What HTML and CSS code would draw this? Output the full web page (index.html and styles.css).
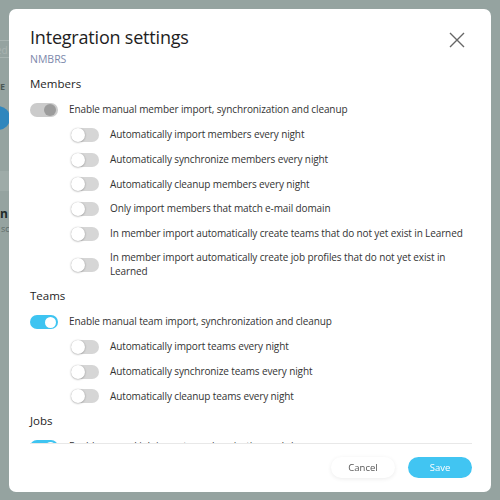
FILE: index.html
```html
<!DOCTYPE html>
<html lang="en">
<head>
<meta charset="utf-8">
<title>Integration settings</title>
<link rel="stylesheet" href="styles.css">
</head>
<body>
<div class="page">
  <div class="page-field"><span class="page-field-text">ed</span></div>
  <div class="page-label">E</div>
  <div class="page-avatar"></div>
  <div class="page-band"></div>
  <div class="page-name">n</div>
  <div class="page-sub">sc</div>
</div>
<div class="modal">
  <div class="modal-header">
    <div class="title-block">
      <h1 class="title">Integration settings</h1>
      <div class="subtitle">NMBRS</div>
    </div>
    <button class="close" aria-label="Close">
      <svg width="16" height="16" viewBox="0 0 16 16"><path d="M1 1 L15 15 M15 1 L1 15" stroke="#666" stroke-width="1.4" fill="none"/></svg>
    </button>
  </div>
  <div class="modal-body">
    <div class="section-title">Members</div>
    <div class="row main"><span class="toggle disabled on"><span class="knob"></span></span><span class="label">Enable manual member import, synchronization and cleanup</span></div>
    <div class="row sub"><span class="toggle"><span class="knob"></span></span><span class="label">Automatically import members every night</span></div>
    <div class="row sub"><span class="toggle"><span class="knob"></span></span><span class="label">Automatically synchronize members every night</span></div>
    <div class="row sub"><span class="toggle"><span class="knob"></span></span><span class="label">Automatically cleanup members every night</span></div>
    <div class="row sub"><span class="toggle"><span class="knob"></span></span><span class="label">Only import members that match e-mail domain</span></div>
    <div class="row sub"><span class="toggle"><span class="knob"></span></span><span class="label">In member import automatically create teams that do not yet exist in Learned</span></div>
    <div class="row sub"><span class="toggle"><span class="knob"></span></span><span class="label">In member import automatically create job profiles that do not yet exist in Learned</span></div>
    <div class="section-title">Teams</div>
    <div class="row main"><span class="toggle on"><span class="knob"></span></span><span class="label">Enable manual team import, synchronization and cleanup</span></div>
    <div class="row sub"><span class="toggle"><span class="knob"></span></span><span class="label">Automatically import teams every night</span></div>
    <div class="row sub"><span class="toggle"><span class="knob"></span></span><span class="label">Automatically synchronize teams every night</span></div>
    <div class="row sub"><span class="toggle"><span class="knob"></span></span><span class="label">Automatically cleanup teams every night</span></div>
    <div class="section-title">Jobs</div>
    <div class="row main"><span class="toggle on"><span class="knob"></span></span><span class="label">Enable manual job import, synchronization and cleanup</span></div>
  </div>
  <div class="modal-footer">
    <button class="btn btn-cancel">Cancel</button>
    <button class="btn btn-save">Save</button>
  </div>
</div>
</body>
</html>
```
FILE: styles.css
```css
* { box-sizing: border-box; }
html, body { margin: 0; padding: 0; }
body {
  width: 500px;
  height: 500px;
  overflow: hidden;
  background: #95a3a0;
  font-family: "Open Sans", "Liberation Sans", sans-serif;
  color: #2b2b2b;
}
.page { position: relative; width: 500px; height: 500px; }
.page-field {
  position: absolute; left: -10px; top: 40px; width: 60px; height: 18px;
  border-top: 1px solid #a8b4b1; border-bottom: 1px solid #a8b4b1;
}
.page-field-text { position: absolute; left: 6px; top: 2px; font-size: 10px; color: #a9b3b1; }
.page-label { position: absolute; left: 0; top: 80px; font-size: 9px; font-weight: 700; color: #4c5856; }
.page-avatar {
  position: absolute; left: -14px; top: 106px; width: 24px; height: 24px;
  border-radius: 50%; background: #2f86bd;
}
.page-band { position: absolute; left: 0; top: 171px; width: 12px; height: 20px; background: #9eaba8; }
.page-name { position: absolute; left: 0; top: 205px; font-size: 12px; font-weight: 700; color: #1f2a28; }
.page-sub { position: absolute; left: 1px; top: 222px; font-size: 9px; color: #5f6d6a; }

.modal {
  position: fixed;
  left: 9px; top: 9px;
  width: 482px; height: 483px;
  background: #fff;
  border-radius: 7px;
  display: flex;
  flex-direction: column;
}
.modal-header {
  display: flex;
  justify-content: space-between;
  align-items: flex-start;
  padding: 16px 26px 0 21px;
}
.title {
  margin: 0;
  font-size: 18px;
  font-weight: 400;
  letter-spacing: -0.2px;
  line-height: 24px;
  color: #1e1e1e;
}
.subtitle {
  margin-top: 3px;
  font-size: 10.5px;
  line-height: 14px;
  color: #7d88ab;
}
.close {
  margin-top: 7px;
  padding: 0;
  border: 0;
  background: none;
  width: 16px; height: 16px;
}
.close svg { display: block; }

.modal-body {
  flex: 1;
  overflow: hidden;
  padding: 11px 26px 0 21px;
  display: flex;
  flex-direction: column;
  gap: 10.7px;
}
.section-title {
  font-size: 11.5px;
  line-height: 14px;
  color: #1e1e1e;
  margin-bottom: 1.5px;
}
.row {
  display: flex;
  align-items: center;
  font-size: 10px;
  letter-spacing: -0.12px;
  line-height: 13.5px;
  color: #333;
}
.row.sub { padding-left: 41px; }
.row .label { flex: 1; padding-left: 11px; }
.toggle {
  position: relative;
  flex: none;
  width: 28px; height: 14px;
  border-radius: 7px;
  background: #d6d6d6;
}
.toggle .knob {
  position: absolute;
  left: 0; top: 0;
  width: 14px; height: 14px;
  border-radius: 50%;
  background: #fff;
  box-shadow: 0 0.5px 2px rgba(0,0,0,0.35);
}
.toggle.on { background: #3ec4f1; }
.toggle.on .knob { left: 15px; top: 1.5px; width: 11px; height: 11px; box-shadow: none; }
.toggle.disabled { background: #cbcbcb; }
.toggle.disabled .knob { background: #9c9c9c; left: 14px; top: 1px; width: 12px; height: 12px; }

.modal-footer {
  margin: 0 19px 0 21px;
  border-top: 1px solid #e8e8e8;
  height: 49px;
  display: flex;
  justify-content: flex-end;
  align-items: center;
  gap: 13px;
  padding-bottom: 1px;
}
.btn {
  width: 64px; height: 21px;
  border: 0;
  border-radius: 11px;
  font-family: inherit;
  font-size: 9.5px;
}
.btn-cancel {
  background: #fff;
  color: #555;
  box-shadow: 0 1px 4px rgba(0,0,0,0.08);
}
.btn-save {
  background: #41c5f2;
  color: #fff;
}
```
